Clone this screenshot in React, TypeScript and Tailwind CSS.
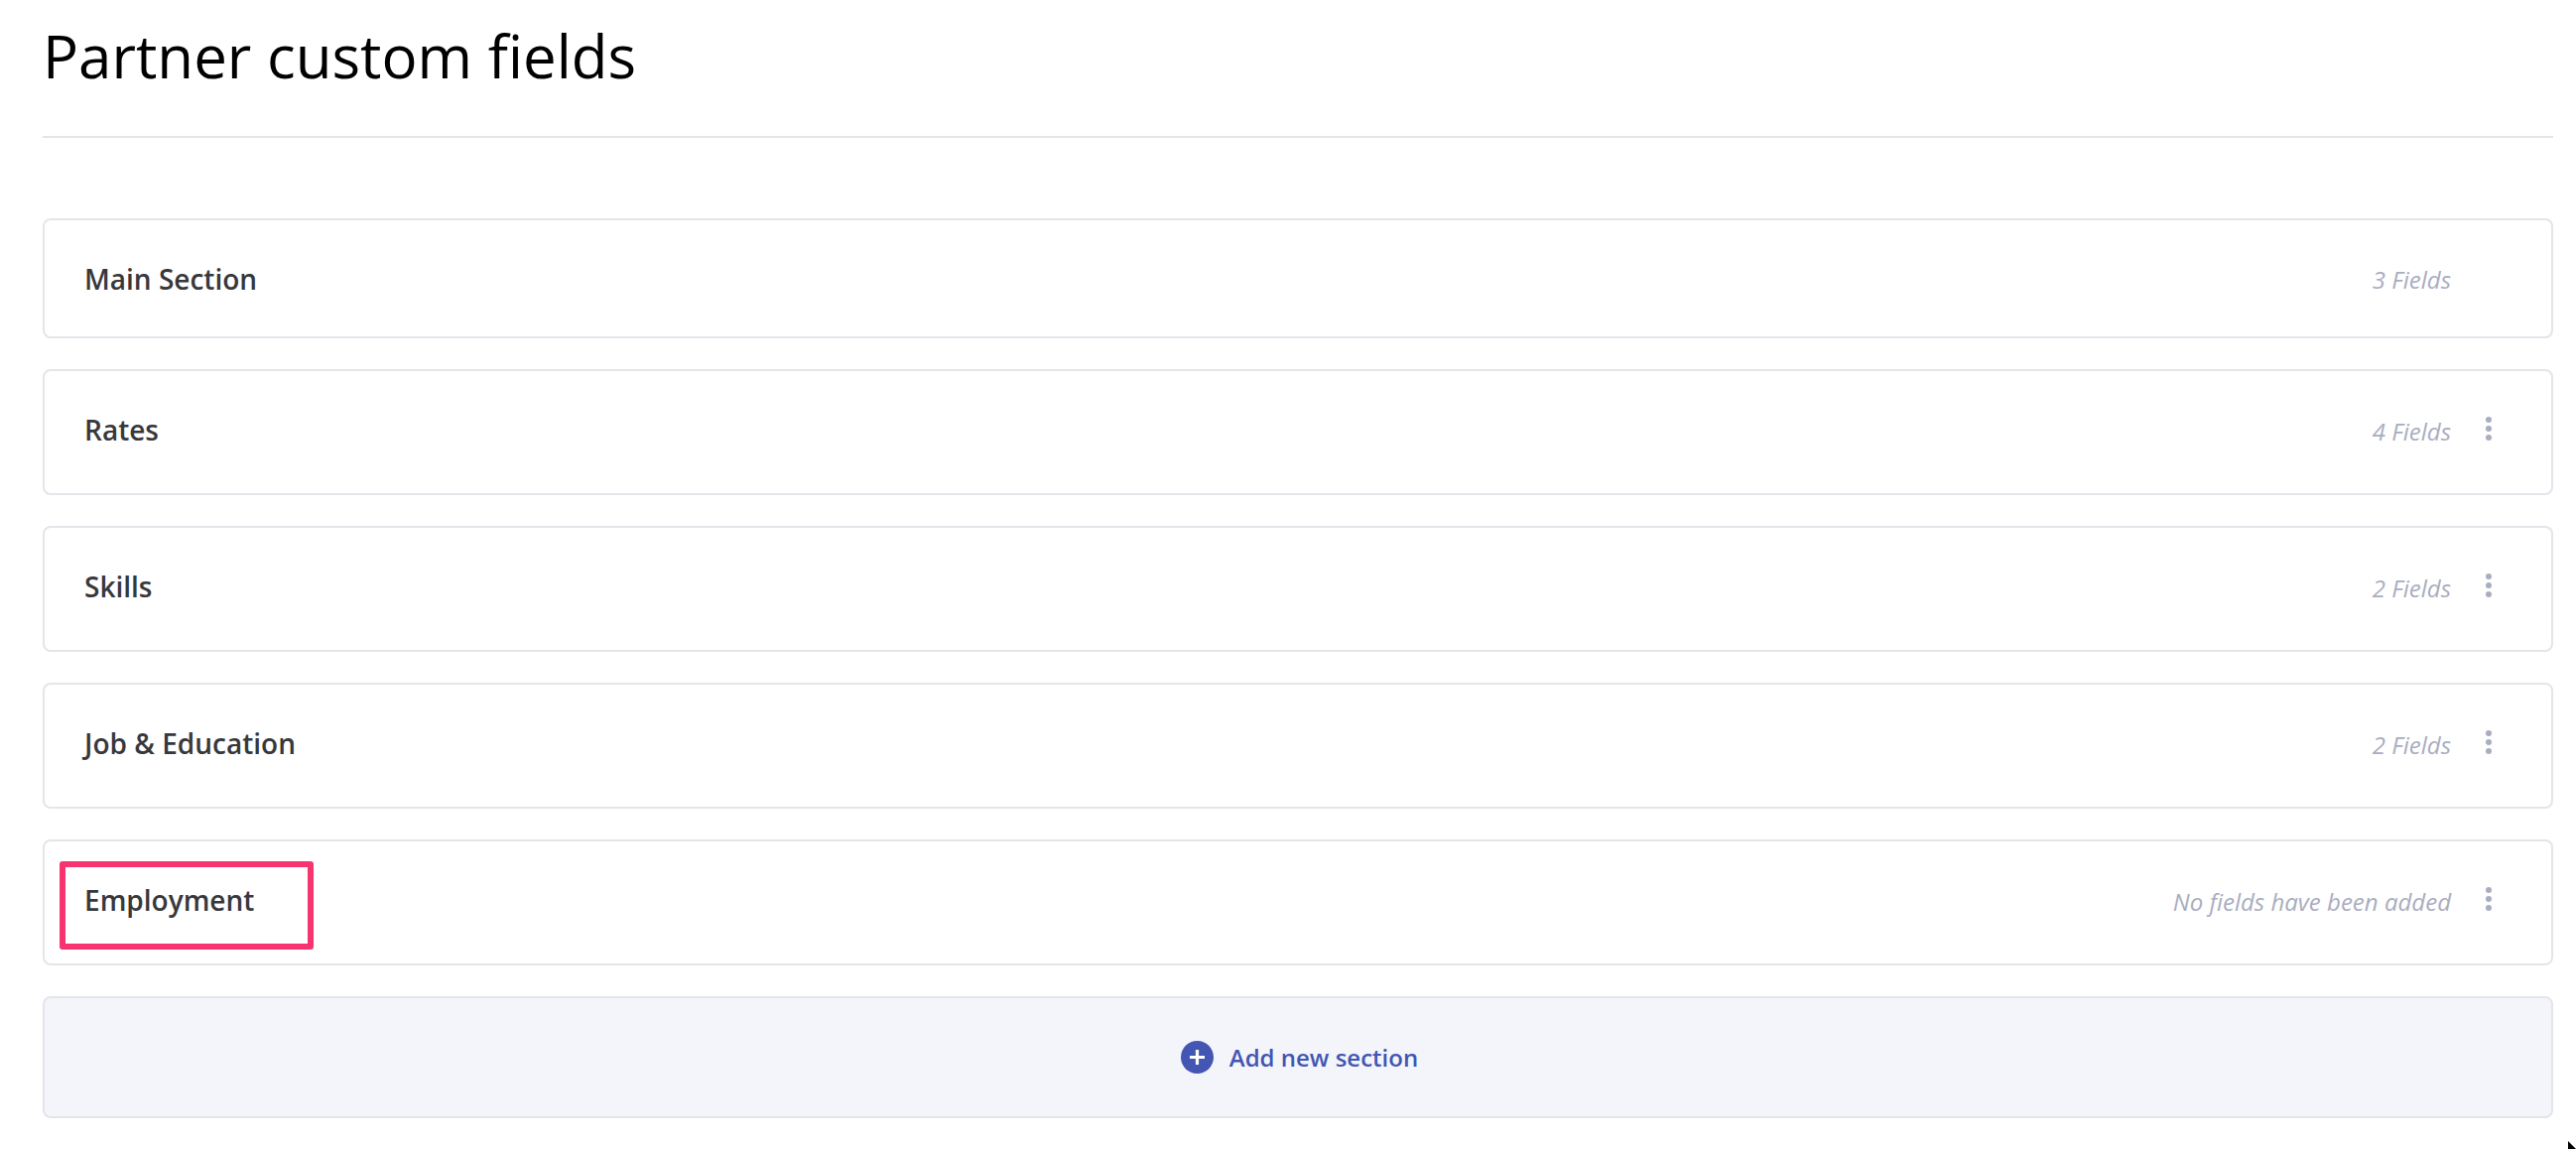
import {FC} from 'react';

const sections = [
  {name: 'Main Section', count: '3 Fields', menu: false},
  {name: 'Rates', count: '4 Fields', menu: true},
  {name: 'Skills', count: '2 Fields', menu: true},
  {name: 'Job & Education', count: '2 Fields', menu: true},
  {name: 'Employment', count: 'No fields have been added', menu: true, marked: true},
];

const Dots: FC = () => (
  <span className="flex w-[6px] flex-col gap-[3px]">
    <span className="h-[6px] w-[6px] rounded-full bg-[#a9adc0]" />
    <span className="h-[6px] w-[6px] rounded-full bg-[#a9adc0]" />
    <span className="h-[6px] w-[6px] rounded-full bg-[#a9adc0]" />
  </span>
);

export default function App() {
  return (
    <div className="relative h-[1158px] w-full overflow-hidden bg-white pl-[43px] pr-[23px] font-['Open_Sans',sans-serif]">
      <h1 className="flex h-[139px] items-center border-b-2 border-[#e4e5ea] pb-[25px] text-[60px] leading-none font-normal text-black">
        Partner custom fields
      </h1>
      <div className="mt-[81px] flex flex-col gap-[31px]">
        {sections.map((s, i) => (
          <div
            key={s.name}
            className={`relative flex items-center rounded-lg border-2 border-[#e4e5ea] pl-[40px] pr-[101px] ${i === 0 ? 'h-[121px]' : 'h-[127px]'}`}>
            <span className={`text-[28px] font-semibold text-[#38383c] ${i === 0 ? '' : 'pb-[6px]'}`}>{s.name}</span>
            <span className={`ml-auto text-[24px] italic text-[#a9adc0] ${i === 0 ? 'pt-[2px]' : 'pb-[2px]'}`}>{s.count}</span>
            <span className="absolute top-[46px] right-[60px]">{s.menu && <Dots />}</span>
            {s.marked && (
              <span className="absolute top-[20px] left-[15px] h-[89px] w-[256px] rounded-[3px] border-[6px] border-[#f7346f]" />
            )}
          </div>
        ))}
        <div className="flex h-[123px] items-center justify-center gap-[16px] rounded-lg border-2 border-[#e4e5ea] bg-[#f4f5fa] pl-[3px]">
          <span className="flex h-[33px] w-[33px] items-center justify-center rounded-full bg-[#4356b3]">
            <svg width="19" height="19" viewBox="0 0 19 19" fill="none" stroke="white" strokeWidth="3.2">
              <path d="M9.5 2v15M2 9.5h15" />
            </svg>
          </span>
          <span className="text-[24px] font-semibold text-[#4356b3]">Add new section</span>
        </div>
      </div>
      <svg className="absolute top-[1150px] right-0" width="8" height="8" viewBox="0 0 8 8">
        <path d="M0 0l8 8H0z" fill="#000" />
      </svg>
    </div>
  );
}
